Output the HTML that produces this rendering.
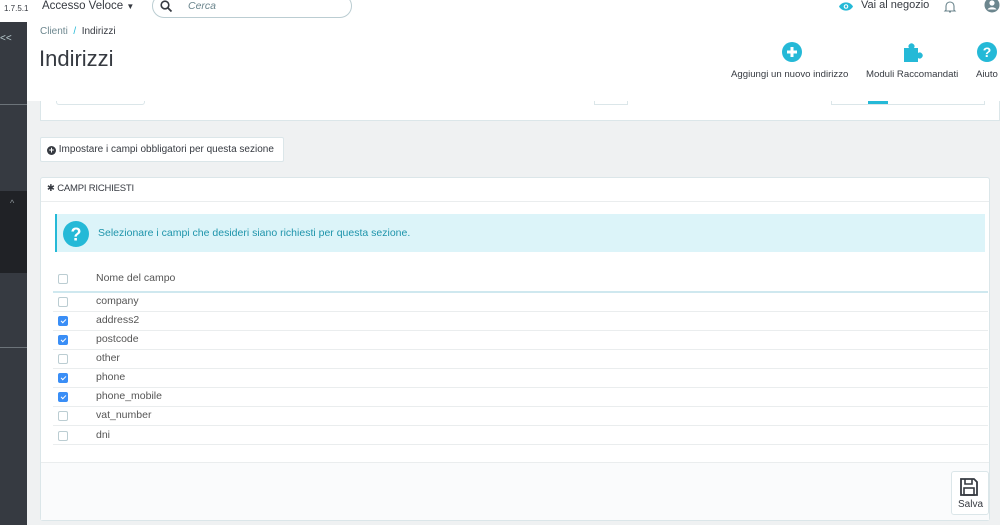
<!DOCTYPE html>
<html><head><meta charset="utf-8"><style>
*{box-sizing:border-box;margin:0;padding:0}
body{width:1000px;height:525px;overflow:hidden;background:#eff1f2;font-family:"Liberation Sans","DejaVu Sans",sans-serif;color:#363a41;position:relative;font-size:11px}
.abs{position:absolute;white-space:nowrap}
.top{left:0;top:0;width:1000px;height:22px;background:#fff}
.side{left:0;top:22px;width:27px;height:503px;background:#363a41}
.hdr{left:27px;top:22px;width:973px;height:79px;background:#fff}
.cb{position:absolute;left:58px;width:10px;height:10px;border:1px solid #bbcdd2;border-radius:2px;background:#fff}
.cb.on{background:#3a8ef6;border-color:#3a8ef6}
.cb.on:after{content:"";position:absolute;left:3px;top:1px;width:2px;height:4px;border:solid #fff;border-width:0 1.3px 1.3px 0;transform:rotate(45deg)}
.row{position:absolute;left:53px;width:935px;height:19px;border-bottom:1px solid #eaedee}
.lbl{position:absolute;left:96px;font-size:10.5px;color:#555}
</style></head><body>
<div class="abs top"></div>
<div class="abs" style="left:4px;top:4px;font-size:8px">1.7.5.1</div>
<div class="abs" style="left:42px;top:0;font-size:11.5px">Accesso Veloce <span style="font-size:8px">▼</span></div>
<div class="abs" style="left:152px;top:-6px;width:200px;height:24px;border:1px solid #bbcdd2;border-radius:12px"></div>
<svg class="abs" style="left:160px;top:0" width="13" height="13" viewBox="0 0 13 13"><circle cx="5" cy="5" r="3.8" fill="none" stroke="#363a41" stroke-width="1.6"/><path d="M8 8l3.5 3.5" stroke="#363a41" stroke-width="1.8"/></svg>
<div class="abs" style="left:188px;top:0;font-style:italic;color:#6c868e;font-size:10.5px">Cerca</div>
<svg class="abs" style="left:838px;top:1px" width="16" height="11" viewBox="0 0 16 11"><path d="M1 5.5C4 0 12 0 15 5.5C12 11 4 11 1 5.5Z" fill="#25b9d7"/><circle cx="8" cy="5.5" r="2.3" fill="#fff"/><circle cx="8" cy="5.5" r="1.2" fill="#25b9d7"/></svg>
<div class="abs" style="left:861px;top:-1px;font-size:11px">Vai al negozio</div>
<svg class="abs" style="left:943px;top:0" width="14" height="14" viewBox="0 0 14 14"><path d="M3 10V6a4 4 0 0 1 8 0v4l1 1H2z" fill="none" stroke="#6c868e" stroke-width="1.1"/><path d="M6 12h2" stroke="#6c868e"/></svg>
<svg class="abs" style="left:984px;top:-3px" width="16" height="16" viewBox="0 0 16 16"><circle cx="8" cy="8" r="7.5" fill="#6c868e"/><circle cx="8" cy="6" r="2.6" fill="#fff"/><path d="M3.5 12.5c1.5-3 7.5-3 9 0" fill="#fff"/></svg>
<div class="abs side"></div>
<div class="abs" style="left:0;top:33px;color:#bbcdd2;font-size:10px">&lt;&lt;</div>
<div class="abs" style="left:0;top:104px;width:27px;height:1px;background:#6c7379"></div>
<div class="abs" style="left:0;top:191px;width:27px;height:82px;background:#202226"></div>
<div class="abs" style="left:10px;top:198px;color:#8d9599;font-size:9px">^</div>
<div class="abs" style="left:0;top:347px;width:27px;height:1px;background:#6c7379"></div>
<div class="abs hdr"></div>
<div class="abs" style="left:40px;top:26px;font-size:10px;color:#6c868e">Clienti <span style="color:#25b9d7">&nbsp;/&nbsp;</span> <span style="color:#363a41">Indirizzi</span></div>
<div class="abs" style="left:39px;top:46px;font-size:22px">Indirizzi</div>
<svg class="abs" style="left:782px;top:42px" width="20" height="20" viewBox="0 0 20 20"><circle cx="10" cy="10" r="10" fill="#25b9d7"/><path d="M10 5v10M5 10h10" stroke="#fff" stroke-width="3"/></svg>
<div class="abs" style="left:731px;top:69px;font-size:9.6px">Aggiungi un nuovo indirizzo</div>
<svg class="abs" style="left:903px;top:42px" width="22" height="20" viewBox="0 0 22 20"><path d="M1 6h5a3 3 0 1 1 5 0h4v5a3 3 0 1 1 0 5v4H1z" fill="#25b9d7"/></svg>
<div class="abs" style="left:866px;top:69px;font-size:9.6px">Moduli Raccomandati</div>
<svg class="abs" style="left:977px;top:42px" width="20" height="20" viewBox="0 0 20 20"><circle cx="10" cy="10" r="10" fill="#25b9d7"/><text x="10" y="15" text-anchor="middle" font-size="14" font-weight="bold" fill="#fff" font-family="Liberation Sans">?</text></svg>
<div class="abs" style="left:976px;top:69px;font-size:9.6px">Aiuto</div>
<div class="abs" style="left:40px;top:101px;width:960px;height:20px;background:#fff;border:1px solid #dbe6e9;border-top:none"></div>
<div class="abs" style="left:56px;top:101px;width:89px;height:4px;border:1px solid #dbe6e9;border-top:none;border-radius:0 0 3px 3px"></div>
<div class="abs" style="left:594px;top:101px;width:34px;height:4px;border:1px solid #dbe6e9;border-top:none"></div>
<div class="abs" style="left:831px;top:101px;width:154px;height:4px;border:1px solid #dbe6e9;border-top:none"></div>
<div class="abs" style="left:868px;top:101px;width:20px;height:3px;background:#25b9d7"></div>
<div class="abs" style="left:40px;top:137px;width:244px;height:25px;background:#fff;border:1px solid #dbe6e9;border-radius:2px;font-size:10px;line-height:23px;padding-left:6px"><span style="display:inline-block;width:9px;height:9px;border-radius:50%;background:#363a41;color:#fff;font-size:9px;line-height:9px;text-align:center;font-weight:bold;vertical-align:-1px">+</span> Impostare i campi obbligatori per questa sezione</div>
<div class="abs" style="left:40px;top:177px;width:950px;height:344px;background:#fff;border:1px solid #dbe6e9;border-radius:3px"></div>
<div class="abs" style="left:41px;top:201px;width:948px;height:1px;background:#eaedee"></div>
<div class="abs" style="left:47px;top:183px;font-size:9.5px;letter-spacing:-.2px">✱ CAMPI RICHIESTI</div>
<div class="abs" style="left:55px;top:214px;width:930px;height:38px;background:#dcf4f9;border-left:2px solid #25b9d7"></div>
<svg class="abs" style="left:63px;top:221px" width="26" height="26" viewBox="0 0 26 26"><circle cx="13" cy="13" r="13" fill="#25b9d7"/><text x="13" y="19.5" text-anchor="middle" font-size="18" font-weight="bold" fill="#fff" font-family="Liberation Sans">?</text></svg>
<div class="abs" style="left:98px;top:227px;font-size:10.5px;color:#1e94ab">Selezionare i campi che desideri siano richiesti per questa sezione.</div>
<div class="cb" style="top:274px"></div>
<div class="lbl" style="top:272px">Nome del campo</div>
<div class="abs" style="left:53px;top:291px;width:935px;height:2px;background:#cfe8ef"></div>
<div class="row" style="top:293px"></div><div class="cb" style="top:297px"></div><div class="lbl" style="top:295px">company</div>
<div class="row" style="top:312px"></div><div class="cb on" style="top:316px"></div><div class="lbl" style="top:314px">address2</div>
<div class="row" style="top:331px"></div><div class="cb on" style="top:335px"></div><div class="lbl" style="top:333px">postcode</div>
<div class="row" style="top:350px"></div><div class="cb" style="top:354px"></div><div class="lbl" style="top:352px">other</div>
<div class="row" style="top:369px"></div><div class="cb on" style="top:373px"></div><div class="lbl" style="top:371px">phone</div>
<div class="row" style="top:388px"></div><div class="cb on" style="top:392px"></div><div class="lbl" style="top:390px">phone_mobile</div>
<div class="row" style="top:407px"></div><div class="cb" style="top:411px"></div><div class="lbl" style="top:409px">vat_number</div>
<div class="row" style="top:426px"></div><div class="cb" style="top:431px"></div><div class="lbl" style="top:429px">dni</div>
<div class="abs" style="left:41px;top:462px;width:948px;height:58px;background:#fafbfc;border-top:1px solid #eaedee"></div>
<div class="abs" style="left:951px;top:471px;width:38px;height:44px;background:#fff;border:1px solid #dbe6e9;border-radius:3px"></div>
<svg class="abs" style="left:959px;top:477px" width="20" height="20" viewBox="0 0 20 20"><path d="M2 2h13l3 3v13H2z" fill="none" stroke="#363a41" stroke-width="1.8"/><path d="M6 2v5h7V2" fill="none" stroke="#363a41" stroke-width="1.6"/><rect x="5" y="11" width="10" height="7" fill="none" stroke="#363a41" stroke-width="1.6"/></svg>
<div class="abs" style="left:958px;top:499px;font-size:10px">Salva</div>
</body></html>
